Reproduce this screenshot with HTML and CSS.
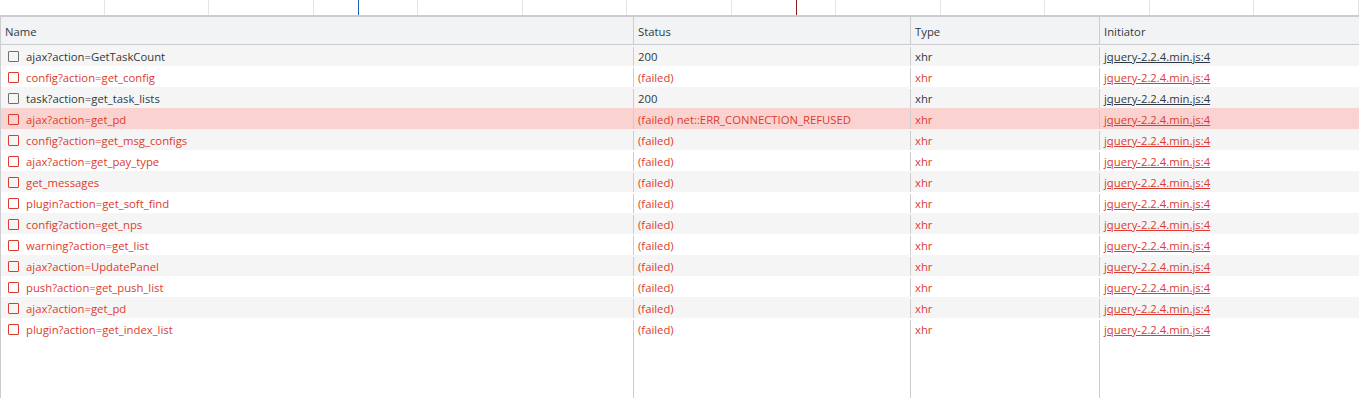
FILE: index.html
```html
<!DOCTYPE html>
<html lang="en">
<head>
    <meta charset="UTF-8">
    <title>Network</title>
    <link rel="stylesheet" href="styles.css">
</head>
<body>
    <div class="overview">
        <div class="tick"></div><div class="tick"></div><div class="tick"></div><div class="tick"></div>
        <div class="tick"></div><div class="tick"></div><div class="tick"></div><div class="tick"></div>
        <div class="tick"></div><div class="tick"></div><div class="tick"></div><div class="tick"></div>
        <div class="tick"></div>
        <span class="marker marker-dom"></span>
        <span class="marker marker-load"></span>
    </div>
    <div class="grid">
        <div class="row head">
            <div class="cell">Name</div>
            <div class="cell">Status</div>
            <div class="cell">Type</div>
            <div class="cell">Initiator</div>
        </div>
        <div id="rows"></div>
        <div class="row filler">
            <div class="cell"></div>
            <div class="cell"></div>
            <div class="cell"></div>
            <div class="cell"></div>
        </div>
    </div>
    <script>
        const requests = [
    ["ajax?action=GetTaskCount", "200", false],
    ["config?action=get_config", "(failed)", true],
    ["task?action=get_task_lists", "200", false],
    ["ajax?action=get_pd", "(failed) net::ERR_CONNECTION_REFUSED", true, true],
    ["config?action=get_msg_configs", "(failed)", true],
    ["ajax?action=get_pay_type", "(failed)", true],
    ["get_messages", "(failed)", true],
    ["plugin?action=get_soft_find", "(failed)", true],
    ["config?action=get_nps", "(failed)", true],
    ["warning?action=get_list", "(failed)", true],
    ["ajax?action=UpdatePanel", "(failed)", true],
    ["push?action=get_push_list", "(failed)", true],
    ["ajax?action=get_pd", "(failed)", true],
    ["plugin?action=get_index_list", "(failed)", true]
];

const rows = document.getElementById("rows");

requests.forEach((req, i) => {
    const row = document.createElement("div");
    row.className = "row";
    if (i % 2 === 0) row.classList.add("odd");
    if (req[2]) row.classList.add("failed");
    if (req[3]) row.classList.add("selected");
    row.innerHTML =
        '<div class="cell"><span class="check"></span>' + req[0] + '</div>' +
        '<div class="cell">' + req[1] + '</div>' +
        '<div class="cell">xhr</div>' +
        '<div class="cell"><a href="#" class="link">jquery-2.2.4.min.js:4</a></div>';
    rows.appendChild(row);
});
    </script>
</body>
</html>
```

FILE: styles.css
```css
* {
    margin: 0;
    padding: 0;
    box-sizing: border-box;
}

body {
    font-family: "Open Sans", "Noto Sans", sans-serif;
    font-size: 11.3px;
    color: #303942;
    background: #fff;
    height: 100vh;
    display: flex;
    flex-direction: column;
    overflow: hidden;
}

.overview {
    height: 17px;
    display: flex;
    position: relative;
    border-bottom: 2px solid #cbcdd1;
}

.tick {
    flex: 1;
    border-right: 1px solid #e4e4e4;
}

.marker {
    position: absolute;
    top: 0;
    bottom: 0;
    width: 1px;
}

.marker-dom {
    left: 358px;
    background: #1a5fb4;
}

.marker-load {
    left: 796px;
    background: #8b1e1e;
}

.grid {
    flex-grow: 1;
    display: flex;
    flex-direction: column;
    border-left: 1px solid #cbcdd1;
}

.row {
    display: grid;
    grid-template-columns: 632px 277px 189px 1fr;
    height: 21px;
    line-height: 20px;
    padding-top: 2px;
}

.row .cell {
    padding-left: 4px;
    white-space: nowrap;
    overflow: hidden;
}

.row .cell + .cell {
    border-left: 1px solid #cbcdd1;
}

.head {
    height: 28px;
    line-height: 25px;
    padding-top: 0;
    background: #f1f3f4;
    border-bottom: 1px solid #cbcdd1;
}

.head .cell {
    padding-top: 2px;
}

.odd {
    background: #f5f5f5;
}

.failed {
    color: #dc3b2e;
}

.selected {
    background: #fad3d0;
}

.check {
    display: inline-block;
    width: 11px;
    height: 11px;
    border: 1px solid #707070;
    border-radius: 1px;
    margin: 0 7px 0 3px;
    vertical-align: -1px;
}

.failed .check {
    border-color: #dc3b2e;
}

.link {
    color: inherit;
    text-decoration: underline;
}

.filler {
    flex-grow: 1;
    height: auto;
    padding-top: 0;
}
```
